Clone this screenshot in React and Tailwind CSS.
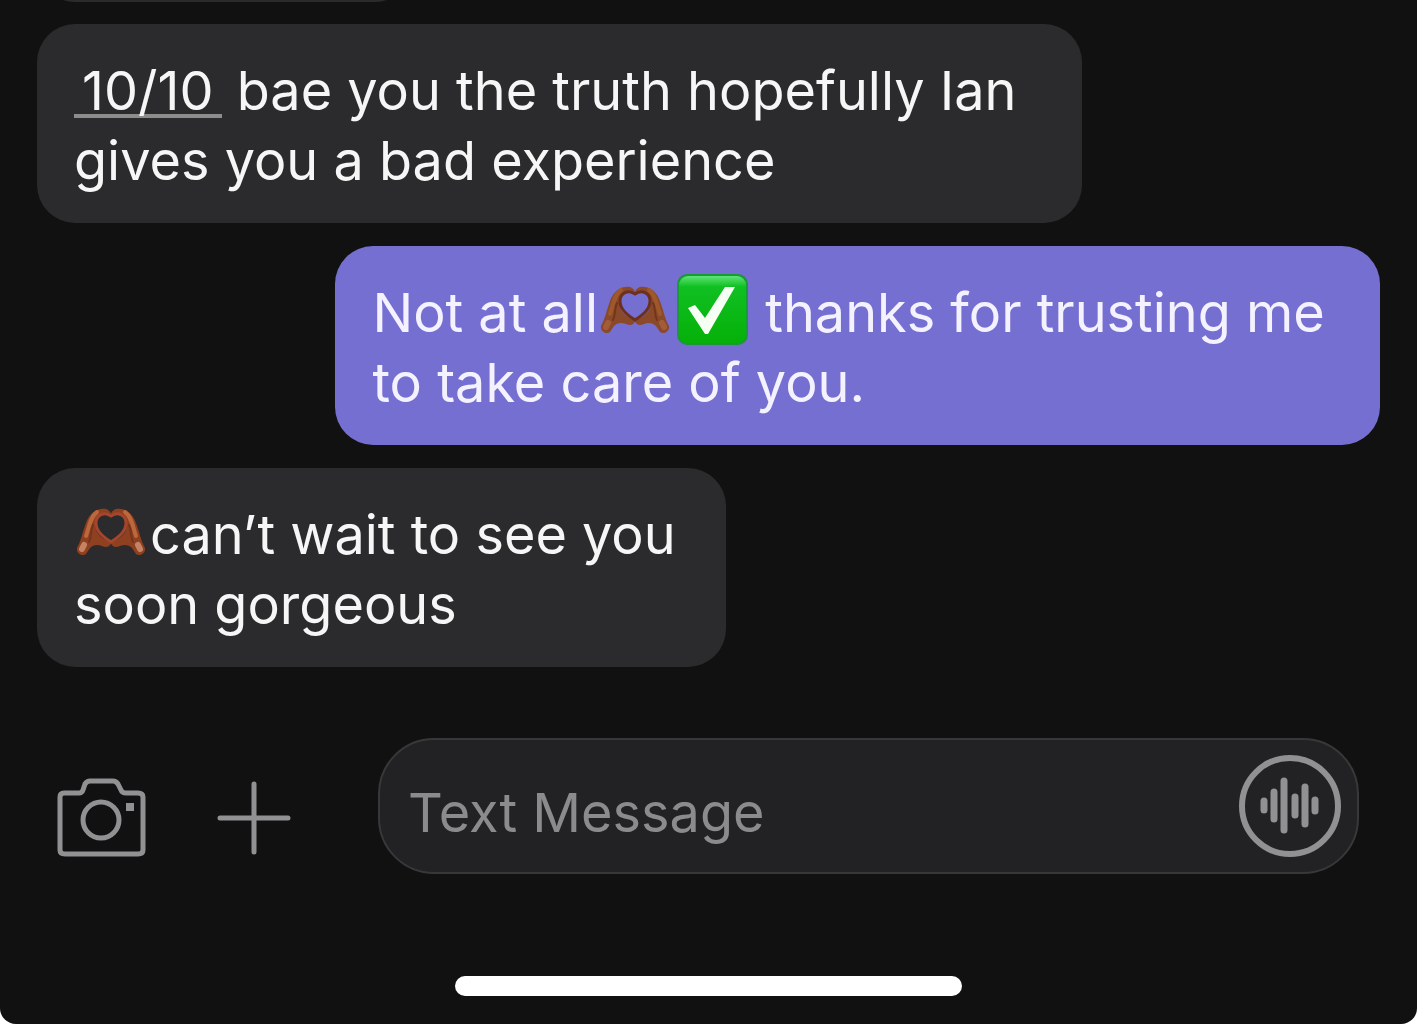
import React, { useId, useState } from "react";
import clsx from "clsx";

function HeartHands({ bright }) {
  return (
    <svg
      role="img"
      aria-label="heart hands"
      viewBox="1 0 76 54"
      className={clsx("inline-block w-[76px] h-[54px] align-baseline -mb-1", bright ? "text-[#8f4020]" : "text-[#8a4a2a]")}
    >
      <g fill="currentColor">
        <path d="M4 44C8 37 9 30 12 22C15 12 20 6 28 5C33 4 37 6 38 10C31 10 25 12 23 18C21 26 25 31 31 35L38 39C37 43 33 44 29 42C24 40 20 41 17 44L13 50C9 53 3 49 4 44Z" />
        <path d="M72 44C68 37 67 30 64 22C61 12 56 6 48 5C43 4 39 6 38 10C45 10 51 12 53 18C55 26 51 31 45 35L38 39C39 43 43 44 47 42C52 40 56 41 59 44L63 50C67 53 73 49 72 44Z" />
      </g>
      <path
        d="M38 12C31 7 23 11 23 19C23 28 31 33 38 38C45 33 53 28 53 19C53 11 45 7 38 12"
        fill="none"
        stroke={bright ? "#a5462c" : "#6d301e"}
        strokeWidth="3"
        strokeLinecap="round"
      />
      <path d="M24 8C17 13 16 24 13 32M52 8C59 13 60 24 63 32" fill="none" stroke={bright ? "#bd673c" : "#9e5829"} strokeWidth="4" strokeLinecap="round" />
      <path d="M20 21C17 27 19 32 16 38M56 21C59 27 57 32 60 38" fill="none" stroke="#74351c" strokeWidth="2" strokeLinecap="round" />
      <path d="M11 41L9 45M65 41L67 45" fill="none" stroke={bright ? "#c58363" : "#a45c38"} strokeWidth="6" strokeLinecap="round" />
    </svg>
  );
}

function CheckEmoji() {
  const id = useId();
  return (
    <svg role="img" aria-label="check mark" viewBox="0 0 76 72" className="inline-block w-[76px] h-[72px] align-middle -mt-4">
      <defs>
        <linearGradient id={id} x1="0" y1="0" x2="0" y2="1">
          <stop offset="0" stopColor="#5ee476" />
          <stop offset="0.16" stopColor="#10c022" />
          <stop offset="1" stopColor="#05b008" />
        </linearGradient>
      </defs>
      <rect x="3" y="1" width="71" height="71" rx="10" fill="#179b32" />
      <rect x="5" y="3" width="67" height="67" rx="9" fill={`url(#${id})`} />
      <path d="M14 35L21 32L31 45L51 14H61L34 61H31Z" fill="#f5fff3" />
    </svg>
  );
}

function CameraIcon() {
  return (
    <svg viewBox="0 0 90 80" className="w-[90px] h-20" fill="none" stroke="currentColor" strokeWidth="5">
      <path d="M8 15H23Q26 15 27 12L29 6Q31 3 34 3H57Q60 3 62 6L65 12Q66 15 70 15H82Q87 15 87 19V72Q87 76 82 76H9Q4 76 4 72V19Q4 15 8 15Z" strokeLinejoin="round" />
      <circle cx="45" cy="42" r="18" />
      <rect x="70" y="25" width="8" height="8" fill="currentColor" stroke="none" />
    </svg>
  );
}

function PlusIcon() {
  return (
    <svg viewBox="0 0 74 74" className="w-[74px] h-[74px]" fill="none" stroke="currentColor" strokeWidth="5" strokeLinecap="round">
      <path d="M37 3V71M3 37H71" />
    </svg>
  );
}

function VoiceIcon() {
  return (
    <svg viewBox="0 0 102 102" className="w-[102px] h-[102px]" fill="none" stroke="currentColor" strokeLinecap="round">
      <circle cx="51" cy="51" r="48" strokeWidth="6" />
      <path d="M25 46V55M35 37V64M45 26V75M56 42V60M66 32V69M76 45V56" strokeWidth="7" />
    </svg>
  );
}

function Bubble({ mine, className, children }) {
  return (
    <li
      className={clsx(
        "rounded-[38px] px-[37px] pt-8 pb-[27px] text-[54px] leading-[70px]",
        mine ? "self-end bg-[#766fd2] text-[#f4f2ff]" : "self-start bg-[#2b2b2d] text-[#f6f6f6]",
        className
      )}
    >
      {children}
    </li>
  );
}

function App() {
  const [message, setMessage] = useState("");

  return (
    <div className="min-h-screen bg-white">
      <main className="min-h-screen flex flex-col rounded-b-2xl bg-[#111111] font-['Inter',sans-serif]">
        {/* tail of the message scrolled off the top */}
        <div className="h-[2px] overflow-hidden flex flex-col justify-end px-[37px]">
          <div className="h-20 w-[28%] shrink-0 rounded-[38px] bg-[#2b2b2d]" />
        </div>

        <ul className="mt-[22px] px-[37px] flex flex-col gap-[23px]">
          <Bubble className="w-7/9">
            <a href="#rating" className="inline-block px-2 border-b-4 border-[#8c8c8c] leading-[46px]">10/10</a> bae you the truth hopefully Ian gives you a bad experience
          </Bubble>
          <Bubble mine className="w-7/9">
            Not at all<HeartHands /><CheckEmoji /> thanks for trusting me to take care of you.
          </Bubble>
          <Bubble className="w-20/39">
            <HeartHands bright />can’t wait to see you soon gorgeous
          </Bubble>
        </ul>

        <form className="mt-[71px] pl-14 pr-[58px] flex items-end text-[#919193]" onSubmit={(e) => e.preventDefault()}>
          <button type="button" aria-label="Camera" className="mb-4 h-20 flex items-center shrink-0">
            <CameraIcon />
          </button>
          <button type="button" aria-label="Add attachment" className="mb-4 ml-[71px] h-20 flex items-center shrink-0">
            <PlusIcon />
          </button>
          <div className="ml-[87px] h-[136px] flex-1 min-w-0 flex items-center rounded-[56px] border-2 border-[#38383a] bg-[#222224] pl-7 pr-4">
            <input
              type="text"
              aria-label="Text Message"
              placeholder="Text Message"
              value={message}
              onChange={(e) => setMessage(e.target.value)}
              className="flex-1 min-w-0 h-20 pt-3 bg-transparent text-[54px] leading-[70px] text-[#f6f6f6] placeholder:text-[#8b8b8d] outline-none"
            />
            <button type="button" aria-label="Record audio" className="shrink-0">
              <VoiceIcon />
            </button>
          </div>
        </form>

        <div className="mt-auto mb-7 h-5 w-5/14 self-center rounded-full bg-white" />
      </main>
    </div>
  );
}

export default App;
